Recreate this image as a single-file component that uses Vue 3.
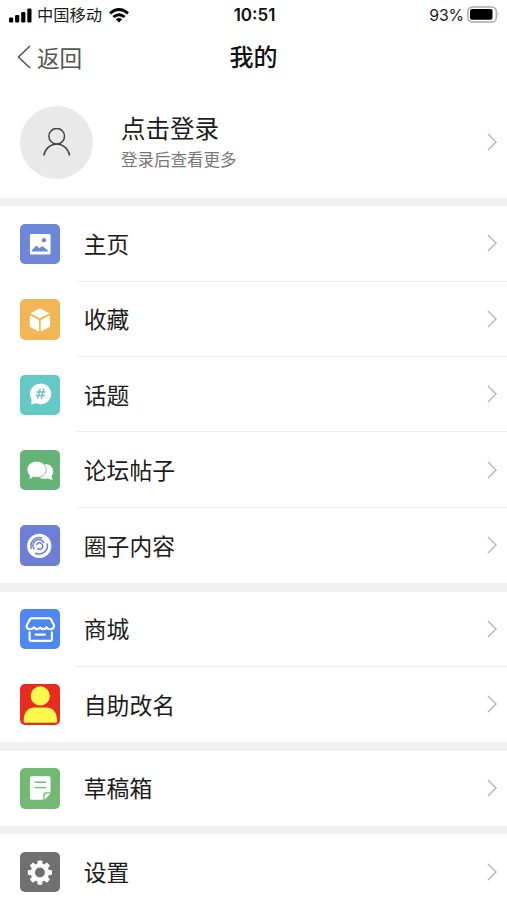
<template>
  <div class="page">
    <header class="status-bar">
      <div class="carrier">
        <svg class="signal" viewBox="0 0 23 15">
          <rect x="0" y="9.5" width="4.2" height="5" rx="1.2" />
          <rect x="6.1" y="7" width="4.2" height="7.5" rx="1.2" />
          <rect x="12.2" y="4" width="4.2" height="10.5" rx="1.2" />
          <rect x="18.3" y="0.5" width="4.2" height="14" rx="1.2" />
        </svg>
        <span>中国移动</span>
        <svg class="wifi" viewBox="0 0 20 15">
          <g fill="none" stroke="#000" stroke-width="2.9">
            <path d="M1 5.3Q10 -2.3 19 5.3" />
            <path d="M4.3 9Q10 4.3 15.7 9" />
          </g>
          <path d="M6.8 11.3Q10 8.8 13.2 11.3L10 14.5Z" />
        </svg>
      </div>
      <strong class="time">10:51</strong>
      <div class="battery">
        <span>93%</span>
        <svg viewBox="0 0 33 17">
          <rect x="0.9" y="0.9" width="28.4" height="15" rx="4.5" fill="none" stroke="#aaa" stroke-width="1.5" />
          <rect x="3" y="3" width="22.5" height="10.8" rx="2" />
          <path d="M30.8 6q1.8 2.4 0 4.8z" fill="#aaa" />
        </svg>
      </div>
    </header>

    <nav class="nav-bar">
      <a class="back">
        <svg viewBox="0 0 14 24"><path d="M13 1L1.5 12L13 23" /></svg>
        <span>返回</span>
      </a>
      <h1>我的</h1>
    </nav>

    <section class="profile">
      <div class="avatar">
        <svg viewBox="0 0 28 28">
          <circle cx="13.7" cy="8.2" r="7.8" />
          <path d="M0.8 27.5C4 12.3 23.5 12.3 26.6 27.5" />
        </svg>
      </div>
      <div class="profile-text">
        <div class="name">点击登录</div>
        <div class="tip">登录后查看更多</div>
      </div>
      <svg class="arrow" viewBox="0 0 10 18"><path d="M1 1L9 9L1 17" /></svg>
    </section>

    <section v-for="(group, i) in groups" :key="i" class="group">
      <div v-for="item in group" :key="item.icon" class="row">
        <svg class="icon" :class="item.icon" viewBox="0 0 122 122">
          <g v-if="item.icon === 'home'">
            <rect x="30" y="30" width="62" height="62" rx="4" fill="#fff" />
            <circle cx="72" cy="49" r="6.5" fill="#6d86d8" />
            <path d="M36 83V79L47 67Q50 65 53 68L58 73L65 68Q68 66 71 69L84 80V83Z" fill="#6d86d8" />
          </g>
          <g v-else-if="item.icon === 'favorite'" fill="#fff" stroke="#fff" stroke-width="3" stroke-linejoin="round">
            <path d="M60 30L86 43L60 56L34 43Z" />
            <path d="M31 51L56 64V96L31 83Z" />
            <path d="M89 51L64 64V96L89 83Z" />
          </g>
          <g v-else-if="item.icon === 'topic'">
            <path d="M62 26A31 31 0 1 1 48 84Q40 89 33 88Q36 80 34 72A31 31 0 0 1 62 26Z" fill="#fff" />
            <path d="M61 41L53 72M72 41L64 72M50 51H77M48 62H75" fill="none" stroke="#65c5c2" stroke-width="4.5" />
          </g>
          <g v-else-if="item.icon === 'forum'" fill="#fff">
            <path d="M74 42C92 42 100 53 100 65Q100 74 95 79Q96 85 99 89Q90 90 84 86Q70 90 57 83Z" />
            <path
              d="M50 34C68 34 79 46 79 59C79 73 66 83 50 83Q45 83 40 81Q34 88 25 88Q30 82 29 77Q21 69 21 59C21 45 34 34 50 34Z"
              stroke="#65b377"
              stroke-width="2.5"
            />
          </g>
          <g v-else-if="item.icon === 'circle'">
            <circle cx="58" cy="63" r="36.5" fill="#fff" />
            <g fill="none" stroke="#6c7ed6" stroke-width="4.5" stroke-linecap="round">
              <path d="M65 39A25 25 0 0 0 34 70" />
              <path d="M82 57A25 25 0 0 1 47 85" />
              <path d="M72 52A18 18 0 0 0 42 72" />
              <path d="M50 58Q58 50 66 57Q72 66 64 72Q59 75 54 71" />
            </g>
          </g>
          <g v-else-if="item.icon === 'shop'" fill="none" stroke="#fff" stroke-width="6.5" stroke-linecap="round" stroke-linejoin="round">
            <path d="M35 28H88Q91 28 93 31L103 50Q101 62 90 61Q83 60 80 55Q72 66 61 56Q51 66 42 55Q36 62 29 61Q19 60 20 50L30 31Q32 28 35 28Z" />
            <path d="M29 70V92Q29 96 33 96H92Q96 96 96 92V70M47 77H75" />
          </g>
          <g v-else-if="item.icon === 'rename'" fill="#fff94d">
            <circle cx="61" cy="36" r="29" />
            <path d="M11 113C11 85 24 71 43 71H80C99 71 112 86 112 113Q112 117 107 117H16Q11 117 11 113Z" />
          </g>
          <g v-else-if="item.icon === 'draft'">
            <path d="M35 25H87Q92 25 92 30V73H79Q70 73 70 82V96H35Q30 96 30 91V30Q30 25 35 25Z" fill="#fff" />
            <path d="M92 77L74 96V84Q74 77 81 77Z" fill="#fff" />
            <path d="M44 43H78M44 59H78" fill="none" stroke="#72ba74" stroke-width="4" />
          </g>
          <g v-else fill="#fff">
            <rect
              v-for="n in 8"
              :key="n"
              x="52.5"
              y="25.5"
              width="15"
              height="18"
              rx="3"
              :transform="`rotate(${n * 45} 60 62)`"
            />
            <circle cx="60" cy="62" r="21.5" fill="none" stroke="#fff" stroke-width="13" />
          </g>
        </svg>
        <div class="row-body">
          <span class="label">{{ item.label }}</span>
          <svg class="arrow" viewBox="0 0 10 18"><path d="M1 1L9 9L1 17" /></svg>
        </div>
      </div>
    </section>
  </div>
</template>

<script setup>
const groups = [
  [
    { icon: 'home', label: '主页' },
    { icon: 'favorite', label: '收藏' },
    { icon: 'topic', label: '话题' },
    { icon: 'forum', label: '论坛帖子' },
    { icon: 'circle', label: '圈子内容' },
  ],
  [
    { icon: 'shop', label: '商城' },
    { icon: 'rename', label: '自助改名' },
  ],
  [{ icon: 'draft', label: '草稿箱' }],
  [{ icon: 'settings', label: '设置' }],
];
</script>

<style>
body {
  margin: 0;
  overflow: hidden;
}
</style>

<style scoped>
.page {
  height: 900px;
  overflow: hidden;
  background: #f0f0f0;
  color: #1c1c1c;
  font-family: Inter, "Noto Sans CJK SC", sans-serif;
}

svg {
  display: block;
  flex-shrink: 0;
}

.status-bar {
  display: grid;
  grid-template-columns: 1fr auto 1fr;
  align-items: center;
  height: 29px;
  padding: 0 7px 0 9px;
  background: #fff;
  font-size: 16.3px;
  line-height: 29px;
}

.carrier,
.battery {
  display: flex;
  align-items: center;
}

.signal {
  width: 23px;
  height: 15px;
  margin-right: 5px;
}

.wifi {
  width: 20px;
  height: 15px;
  margin-left: 7px;
}

.time {
  padding-top: 1px;
  font-size: 17px;
  font-weight: 600;
  color: #111;
}

.battery {
  justify-content: flex-end;
  gap: 3px;
  font-size: 15.8px;
  letter-spacing: -0.1px;
}

.battery svg {
  width: 33px;
  height: 17px;
  margin-bottom: 1px;
}

.nav-bar {
  display: grid;
  grid-template-columns: 1fr auto 1fr;
  align-items: center;
  height: 57px;
  background: #fff;
}

.back {
  display: flex;
  align-items: center;
  gap: 6px;
  padding: 0 0 1px 17px;
  font-size: 22.6px;
  color: #555;
}

.back svg {
  width: 14px;
  height: 24px;
}

.back path {
  fill: none;
  stroke: #555;
  stroke-width: 1.6;
}

h1 {
  margin: 0;
  font-size: 24px;
  font-weight: 500;
  line-height: 36px;
  color: #111;
}

.profile {
  display: flex;
  align-items: center;
  box-sizing: border-box;
  height: 112px;
  padding: 0 10px 0 20px;
  background: #fff;
}

.avatar {
  display: flex;
  align-items: center;
  justify-content: center;
  width: 73px;
  height: 73px;
  border-radius: 50%;
  background: #e9e9e9;
}

.avatar svg {
  width: 28px;
  height: 28px;
}

.avatar circle,
.avatar path {
  fill: none;
  stroke: #444;
  stroke-width: 1.5;
}

.profile-text {
  flex: 1;
  margin-left: 28px;
}

.name {
  font-size: 24.5px;
  line-height: 34px;
}

.tip {
  padding-top: 1px;
  font-size: 16.5px;
  line-height: 26px;
  color: #777;
}

.arrow {
  width: 10px;
  height: 18px;
}

.arrow path {
  fill: none;
  stroke: #b5b5b5;
  stroke-width: 1.4;
}

.group {
  margin-top: 8.3px;
  background: #fff;
}

.row {
  display: flex;
  align-items: center;
  height: 75.4px;
  padding-left: 19.8px;
}

.row-body {
  display: flex;
  align-items: center;
  justify-content: space-between;
  flex: 1;
  box-sizing: border-box;
  height: 100%;
  margin-left: 15.5px;
  padding: 0 10px 0 8px;
  border-bottom: 1px solid #eee;
}

.row:last-child .row-body {
  border-bottom-color: transparent;
}

.label {
  font-size: 22.8px;
}

.icon {
  width: 40.5px;
  height: 40.5px;
  border-radius: 5px;
}

.home { background: #6d86d8; }
.favorite { background: #f3b656; }
.topic { background: #65c9c6; }
.forum { background: #65b377; }
.circle { background: #6c7ed6; }
.shop { background: #4f88f5; }
.rename { background: #e72b20; }
.draft { background: #72ba74; }
.settings { background: #707070; }
</style>
